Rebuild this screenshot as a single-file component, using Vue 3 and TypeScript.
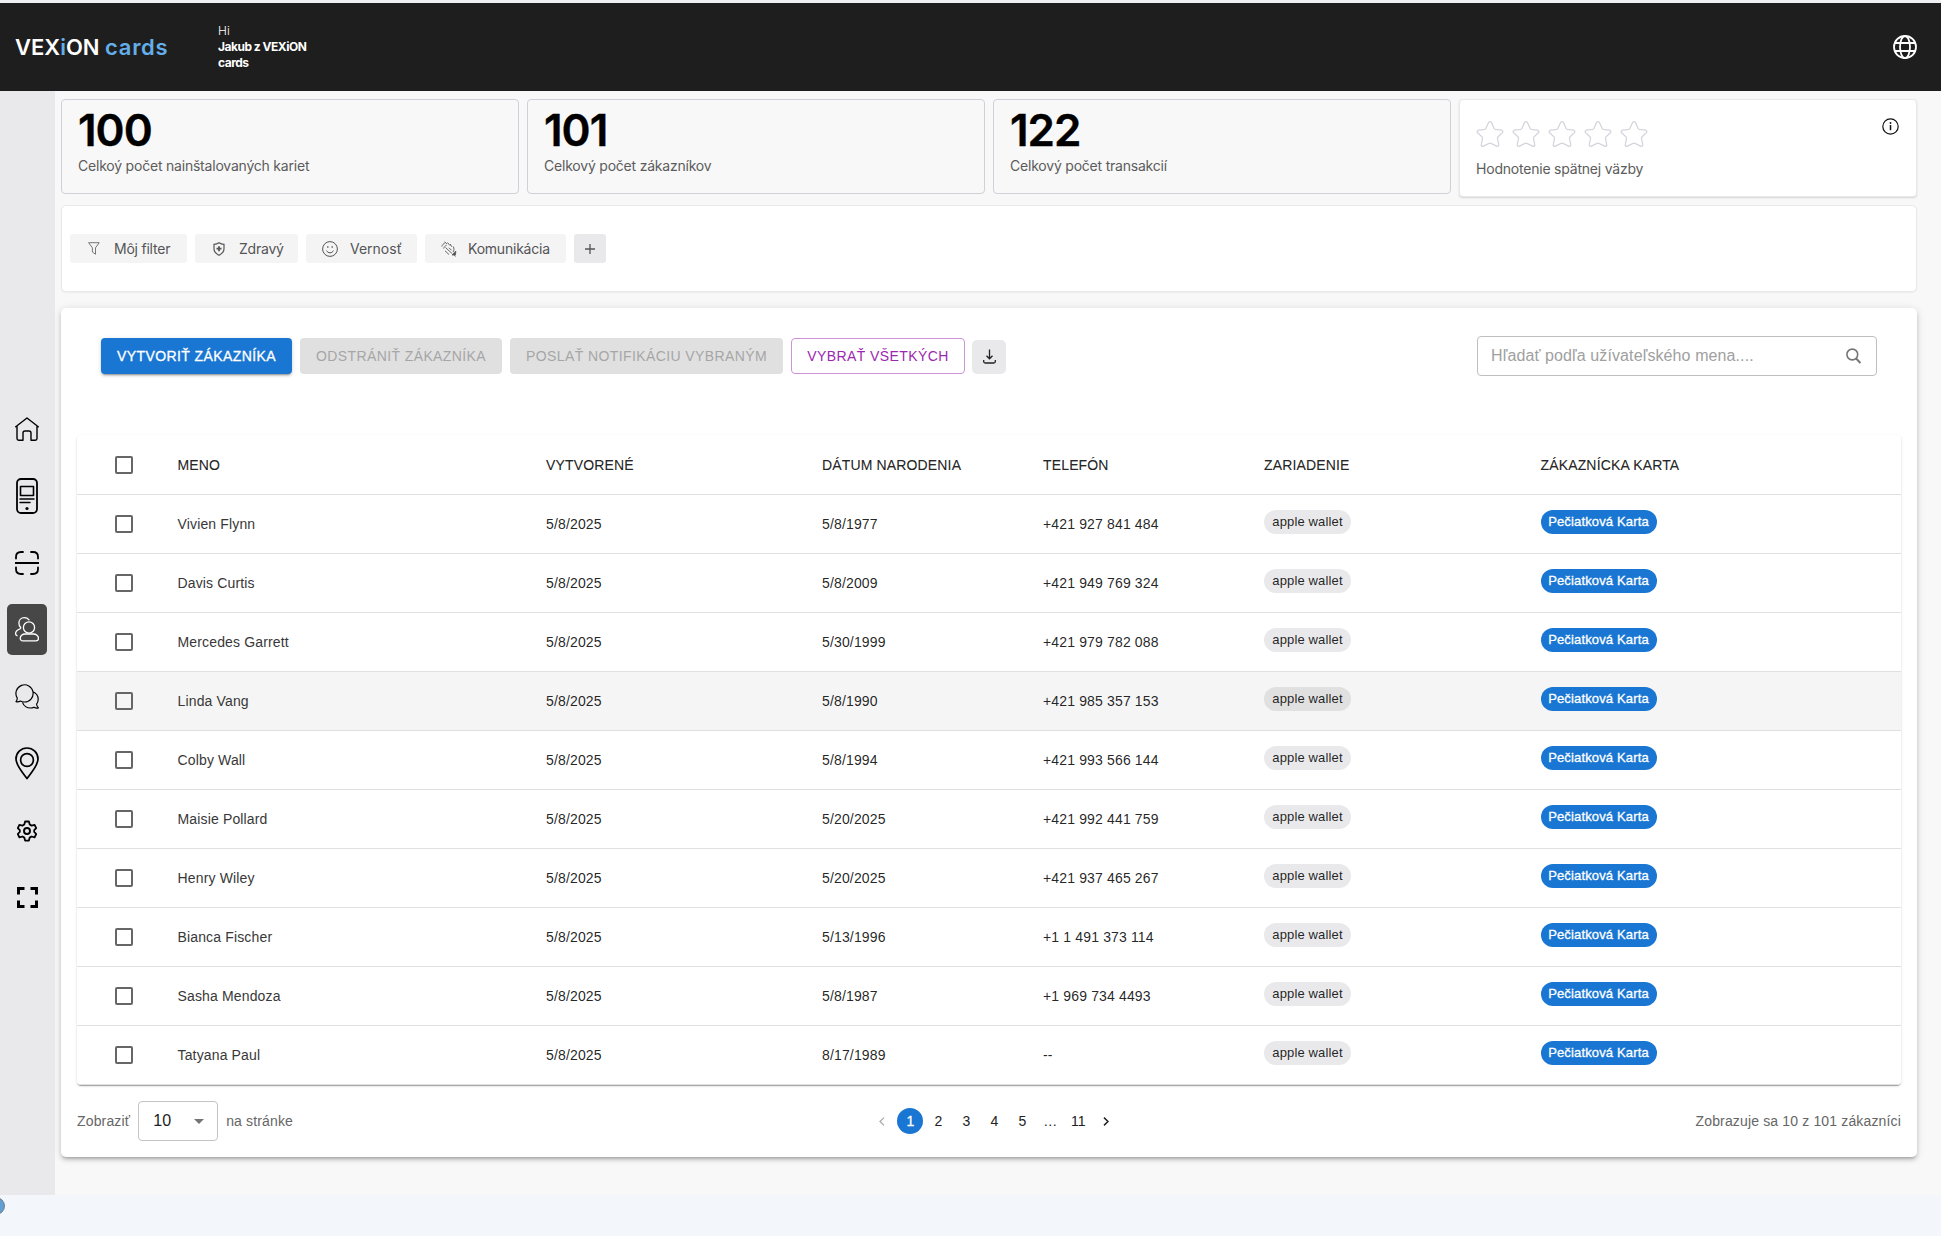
<script setup lang="ts">
interface Customer {
  name: string
  created: string
  born: string
  phone: string
  hovered?: boolean
}

const stats = [
  { value: '100', label: 'Celkoý počet nainštalovaných kariet' },
  { value: '101', label: 'Celkový počet zákazníkov' },
  { value: '122', label: 'Celkový počet transakcií' },
]

const columns = ['Meno', 'Vytvorené', 'Dátum narodenia', 'Telefón', 'Zariadenie', 'Zákaznícka karta']

const customers: Customer[] = [
  { name: 'Vivien Flynn', created: '5/8/2025', born: '5/8/1977', phone: '+421 927 841 484' },
  { name: 'Davis Curtis', created: '5/8/2025', born: '5/8/2009', phone: '+421 949 769 324' },
  { name: 'Mercedes Garrett', created: '5/8/2025', born: '5/30/1999', phone: '+421 979 782 088' },
  { name: 'Linda Vang', created: '5/8/2025', born: '5/8/1990', phone: '+421 985 357 153', hovered: true },
  { name: 'Colby Wall', created: '5/8/2025', born: '5/8/1994', phone: '+421 993 566 144' },
  { name: 'Maisie Pollard', created: '5/8/2025', born: '5/20/2025', phone: '+421 992 441 759' },
  { name: 'Henry Wiley', created: '5/8/2025', born: '5/20/2025', phone: '+421 937 465 267' },
  { name: 'Bianca Fischer', created: '5/8/2025', born: '5/13/1996', phone: '+1 1 491 373 114' },
  { name: 'Sasha Mendoza', created: '5/8/2025', born: '5/8/1987', phone: '+1 969 734 4493' },
  { name: 'Tatyana Paul', created: '5/8/2025', born: '8/17/1989', phone: '--' },
]

const pages = ['1', '2', '3', '4', '5', '…', '11']
</script>

<template>
  <div class="app">
    <header class="topbar">
      <div class="logo">VEX<span class="accent">i</span>ON <span class="accent cards">cards</span></div>
      <div class="greeting">
        <span class="hi">Hi</span>
        <strong>Jakub z VEXiON cards</strong>
      </div>
      <svg class="globe" viewBox="0 0 24 24" fill="none" stroke="#fff" stroke-width="1.8">
        <circle cx="12" cy="12" r="11" />
        <ellipse cx="12" cy="12" rx="5" ry="11" />
        <path d="M1.8 8h20.4M1.8 16h20.4" />
      </svg>
    </header>

    <div class="body">
      <nav class="sidebar">
        <a class="nav"><svg width="24" height="24" viewBox="0 0 24 24" stroke-width="1.4"><path d="M.7 9.7 12 1l11.3 8.700M2 8.800V21.500Q2 23.200 3.700 23.200H8V16q0-2 2-2h4q2 0 2 2v7.200h4.300q1.700 0 1.700-1.700V8.800" /></svg></a>
        <a class="nav"><svg width="22" height="36" viewBox="0 0 22 36"><rect x="1" y="1" width="20" height="34" rx="4" stroke-width="1.8" /><rect x="4.500" y="8.500" width="13" height="9" stroke-width="1.600" /><path d="M4 21h14M4 24.500h10" stroke-width="1.500" /><circle cx="11" cy="30.500" r="1.600" fill="#000" stroke="none" /></svg></a>
        <a class="nav"><svg width="24" height="24" viewBox="0 0 24 24" stroke-width="1.8"><path d="M1 7.500V6q0-5 5-5h2M16 1h2q5 0 5 5v1.500M1 16.500V18q0 5 5 5h2M16 23h2q5 0 5-5v-1.500M0 12h24" /></svg></a>
        <a class="nav active"><svg width="24" height="25" viewBox="0 0 24 25" stroke-width="1.3"><circle cx="14" cy="10.500" r="5.600" /><path d="M10 17h8.500c2.500 0 5 2 5 4.300 0 1.500-.9 2.500-2.500 2.500H7.800c-1.600 0-2.600-1-2.600-2.500C5.200 19 7.500 17 10 17zM14 2.800C12.800 1.300 11 .7 9.300.7 6.200.7 3.900 3 3.900 6c0 1.700.5 3 1.600 4.200.5.700.2 1.300-.5 1.600C2.300 12.800.6 14.300.6 16.500c0 1 .5 1.900 1.400 2.200" /></svg></a>
        <a class="nav"><svg width="24" height="25" viewBox="0 0 24 25"><path d="M1 17.600c1-1.200 1.400-2.300 1.200-3.700A8.600 8.600 0 1 1 9.300 18c-1.500 0-2.700-.3-3.900-1-1.300.8-2.800 1-4.400.6zM18 7.700c3.200 1.400 5.200 4.200 5.200 7.500 0 2-.6 3.600-1.600 5 .1 1.500.7 2.500 1.800 3.700-1.700.4-3.200.1-4.400-.7-1 .5-2.200.8-3.500.8-3.600 0-6.600-2-7.800-5.100" stroke-width="1.200" /></svg></a>
        <a class="nav"><svg width="24" height="33" viewBox="0 0 24 33"><path d="M12 31.500C8 26 1 18.500 1 12a11 11 0 0 1 22 0c0 6.500-7 14-11 19.500z" stroke-width="1.700" /><circle cx="12" cy="13" r="6.400" stroke-width="1.700" /></svg></a>
        <a class="nav"><svg width="20" height="22" viewBox="0 0 20 22"><path d="M8.100 1.500h3.800l.8 3 1.900 1.100 3-.8 1.600 3.300-2 2.100v1.700l2 2.100-1.600 3.300-3-.8-1.900 1.100-.8 3H8.100l-.8-3-1.900-1.100-3 .8L.8 14l2-2.100v-1.700l-2-2.100 1.600-3.300 3 .8 1.900-1.100z" stroke-width="1.800" /><circle cx="10" cy="11" r="3" stroke-width="1.900" /></svg></a>
        <a class="nav"><svg width="21" height="21" viewBox="0 0 21 21" stroke-width="3"><path d="M1.500 7.500v-6h6M13.500 1.500h6v6M1.500 13.500v6h6M13.500 19.500h6v-6" stroke-linecap="butt" stroke-linejoin="miter" /></svg></a>
      </nav>

      <main class="main">
        <section class="stats">
          <article v-for="s in stats" :key="s.value" class="stat">
            <div class="value">{{ s.value }}</div>
            <div class="label">{{ s.label }}</div>
          </article>
          <article class="stat rating">
            <div class="stars">
              <svg v-for="n in 5" :key="n" viewBox="0 0 28 28"><path d="M14 1.600c.8 0 1.200.5 1.500 1.100l2.700 5.800c.2.500.6.800 1.200.9l6 .8c1.400.2 1.900 1.600.9 2.600l-4.400 4.200c-.4.400-.5.900-.4 1.400l1.200 6.200c.2 1.400-1 2.200-2.200 1.600l-5.500-2.800a2 2 0 0 0-2 0l-5.500 2.800c-1.200.6-2.400-.2-2.200-1.600l1.200-6.200c.1-.5 0-1-.4-1.400l-4.400-4.200c-1-1-.5-2.400.9-2.600l6-.8c.6-.1 1-.4 1.200-.9l2.700-5.800c.3-.6.7-1.100 1.500-1.100z" /></svg>
            </div>
            <div class="label">Hodnotenie spätnej väzby</div>
            <svg class="info" viewBox="0 0 17 17"><circle cx="8.500" cy="8.500" r="7.700" fill="none" stroke="#111" stroke-width="1.200" /><path d="M8.500 7v5.200" stroke="#111" stroke-width="1.500" /><circle cx="8.500" cy="5" r=".9" fill="#111" /></svg>
          </article>
        </section>

        <section class="filters">
          <button class="filter f1"><svg width="12" height="13" viewBox="0 0 12 13"><path d="M.6.700h10.600L7.500 5.800v6.400L4.400 10V5.800z" stroke-width=".8" /></svg>Môj filter</button>
          <button class="filter f2"><svg width="12" height="14" viewBox="0 0 12 14"><path d="M6 .8c1.600 1.100 3.200 1.500 5 1.600v4.400c0 3-1.900 5-5 6.400-3.100-1.400-5-3.400-5-6.400V2.400C2.800 2.300 4.400 1.900 6 .8z" stroke-width="1.200" /><path d="M6 4.200v5M3.500 6.700h5" stroke-width="1.800" /></svg>Zdravý</button>
          <button class="filter f3"><svg width="16" height="16" viewBox="0 0 16 16"><circle cx="8" cy="8" r="7.400" stroke-width="1" /><path d="M4.600 9.600c.7 1.500 1.900 2.200 3.400 2.200s2.700-.7 3.400-2.200" stroke-width="1" /><path d="M5.800 5.200v1.600M10.200 5.200v1.600" stroke-width="1.300" /></svg>Vernosť</button>
          <button class="filter f4"><svg width="16" height="16" viewBox="0 0 16 16"><path d="M.8 5.500C1.300 3.800 2.200 2.800 3.800 2M2.700 7.500c.3-1.500 1.200-2.600 2.800-3.200M3.500.8 6 3M6.500 1.500l2.300 3M9.200 3l1.600 2.800M4.500 6.500l6.500 6M4 9.800l4 3.700M8 6.800l2.500 2.500M12.300 5.500c.9 2 .9 4-.3 5.500" stroke-width=".9" /><path d="m14.800 10-3.800 4h3.500zM12.500 13l2 2.500" fill="#555" stroke-width=".8" /></svg>Komunikácia</button>
          <button class="filter add"><svg width="10" height="10" viewBox="0 0 10 10"><path d="M5 0v10M0 5h10" stroke-width="1.300" /></svg></button>
        </section>

        <section class="panel">
          <div class="toolbar">
            <button class="btn primary">Vytvoriť zákazníka</button>
            <button class="btn disabled b2">Odstrániť zákazníka</button>
            <button class="btn disabled b3">Poslať notifikáciu vybraným</button>
            <button class="btn outlined">Vybrať všetkých</button>
            <button class="download"><svg width="13" height="15" viewBox="0 0 13 15" fill="none" stroke="#222" stroke-width="1.300"><path d="M6.500.5v9M3.500 6.800l3 3 3-3M.7 11v1.500q0 1.500 1.500 1.500h8.600q1.500 0 1.500-1.500V11" /></svg></button>
            <div class="search">
              <span>Hľadať podľa užívateľského mena....</span>
              <svg width="15" height="16" viewBox="0 0 15 16" fill="none" stroke="#757575" stroke-width="1.600"><circle cx="6.300" cy="6.500" r="5.400" /><path d="m10.200 10.500 4.200 4.500" stroke-width="1.900" /></svg>
            </div>
          </div>

          <div class="table-wrap">
            <table>
              <colgroup>
                <col class="c0" /><col class="c1" /><col class="c2" /><col class="c3" /><col class="c4" /><col class="c5" /><col />
              </colgroup>
              <thead>
                <tr>
                  <th class="check"><i class="box"></i></th>
                  <th v-for="c in columns" :key="c">{{ c }}</th>
                </tr>
              </thead>
              <tbody>
                <tr v-for="c in customers" :key="c.name" :class="{ hovered: c.hovered }">
                  <td class="check"><i class="box"></i></td>
                  <td class="name">{{ c.name }}</td>
                  <td>{{ c.created }}</td>
                  <td>{{ c.born }}</td>
                  <td>{{ c.phone }}</td>
                  <td><span class="chip">apple wallet</span></td>
                  <td><span class="chip blue">Pečiatková Karta</span></td>
                </tr>
              </tbody>
            </table>
          </div>

          <footer class="pager">
            <div class="size">
              <span>Zobraziť</span>
              <div class="select"><span>10</span><svg width="10" height="5" viewBox="0 0 10 5"><path d="M0 0h10L5 5z" fill="#757575" /></svg></div>
              <span>na stránke</span>
            </div>
            <div class="pages">
              <span class="page"><svg width="6" height="9" viewBox="0 0 6 9"><path d="M5 .6 1 4.500l4 3.900" fill="none" stroke="#aaa" stroke-width="1.300" /></svg></span>
              <span v-for="p in pages" :key="p" class="page" :class="{ current: p === '1' }">{{ p }}</span>
              <span class="page"><svg width="6" height="9" viewBox="0 0 6 9"><path d="m1 .6 4 3.900-4 3.900" fill="none" stroke="#222" stroke-width="1.500" /></svg></span>
            </div>
            <div class="total">Zobrazuje sa 10 z 101 zákazníci</div>
          </footer>
        </section>
      </main>
    </div>
    <div class="bottom"><i class="bubble"></i></div>
  </div>
</template>

<style>
body { margin: 0; }
</style>

<style scoped>
* { box-sizing: border-box; }
.app {
  width: 1941px;
  height: 1236px;
  position: relative;
  overflow: hidden;
  display: flex;
  flex-direction: column;
  background: #f8f8f8;
  border-top: 3px solid #eff0f2;
  font-family: "Liberation Sans", Arial, sans-serif;
  color: rgba(0, 0, 0, .87);
}
button { font: inherit; border: 0; padding: 0; }
.topbar {
  height: 88px;
  flex: none;
  background: #1e1e1e;
  color: #fff;
  display: flex;
  align-items: center;
  padding: 0 24px 0 15px;
  font-family: Inter, sans-serif;
}
.logo { width: 203px; font-size: 22px; font-weight: 600; white-space: nowrap; }
.accent { color: #64aeea; }
.cards { letter-spacing: .7px; }
.greeting { width: 100px; font-size: 12px; line-height: 16px; }
.greeting .hi { display: block; font-weight: 300; }
.greeting strong { font-weight: 700; display: block; letter-spacing: -.5px; }
.globe { width: 24px; height: 24px; margin-left: auto; }
.body { height: 1104px; flex: none; display: flex; }
.sidebar {
  width: 55px;
  padding-top: 40px;
  background: #e9e9eb;
  display: flex;
  flex-direction: column;
  align-items: center;
  justify-content: center;
  gap: 16px;
}
.nav {
  width: 40px;
  height: 51px;
  border-radius: 5px;
  margin-right: 1px;
  display: flex;
  align-items: center;
  justify-content: center;
}
.nav svg { fill: none; stroke: #000; stroke-linejoin: round; stroke-linecap: round; }
.nav.active { background: #474747; }
.nav.active svg { stroke: #fff; }
.main { flex: 1; padding: 8px 24px 0 6px; }
.stats { display: flex; gap: 8px; align-items: flex-start; height: 106px; }
.stat {
  width: 458px;
  height: 95px;
  border: 1px solid #d0d1d8;
  border-radius: 4px;
  padding: 3px 16px;
  font-family: Inter, sans-serif;
}
.value { font-size: 44px; line-height: 54px; font-weight: 600; letter-spacing: -1px; color: #000; -webkit-text-stroke: .4px; }
.label { font-size: 14px; line-height: 18px; letter-spacing: -.21px; color: #5c5c5c; white-space: nowrap; }
.rating {
  position: relative;
  height: 98px;
  background: #fff;
  border-color: #e8e8ea;
  box-shadow: 0 1px 2px rgba(0, 0, 0, .14);
  padding: 20px 16px;
}
.stars { display: flex; gap: 8px; height: 40px; }
.stars svg { width: 28px; height: 28px; fill: none; stroke: #d5d5de; stroke-width: 1.300; }
.info { position: absolute; width: 17px; height: 17px; right: 17px; top: 18px; }
.filters {
  height: 87px;
  border: 1px solid #e9e9ea;
  border-radius: 5px;
  background: #fff;
  box-shadow: 0 1px 2px rgba(0, 0, 0, .05);
  padding: 0 8px;
  display: flex;
  align-items: center;
  gap: 8px;
}
.filter {
  height: 29px;
  border-radius: 3px;
  background: #f4f4f5;
  color: #555;
  font: 14px Inter, sans-serif;
  letter-spacing: -.22px;
  display: flex;
  align-items: center;
  white-space: nowrap;
}
.filter svg { fill: none; stroke: #555; flex: none; }
.f1 { width: 117px; padding-left: 18px; gap: 14px; }
.f2 { width: 103px; padding-left: 18px; gap: 14px; }
.f3 { width: 111px; padding-left: 16px; gap: 12px; letter-spacing: 0; }
.f4 { width: 141px; padding-left: 16px; gap: 11px; }
.add { width: 32px; background: #e9e9eb; justify-content: center; }
.panel {
  height: 849px;
  margin-top: 16px;
  border-radius: 5px;
  background: #fff;
  box-shadow: 0 3px 3px -2px rgba(0, 0, 0, .2), 0 3px 4px rgba(0, 0, 0, .14), 0 1px 8px rgba(0, 0, 0, .12);
  padding: 28px 16px 0;
}
.toolbar { height: 99px; padding: 0 24px; display: flex; align-items: flex-start; gap: 8px; }
.btn {
  height: 36px;
  margin-top: 2px;
  border-radius: 4px;
  font-size: 14px;
  letter-spacing: .4px;
  text-transform: uppercase;
  white-space: nowrap;
}
.primary {
  width: 191px;
  background: #1976d2;
  color: #fff;
  font-weight: 400;
  -webkit-text-stroke: .3px;
  box-shadow: 0 3px 1px -2px rgba(0, 0, 0, .2), 0 2px 2px rgba(0, 0, 0, .14), 0 1px 5px rgba(0, 0, 0, .12);
}
.disabled { background: #e0e0e0; color: #a6a6a6; }
.b2 { width: 202px; }
.b3 { width: 273px; }
.outlined { width: 174px; border: 1px solid #cd93d7; color: #9c27b0; background: #fff; }
.download {
  width: 34px;
  height: 34px;
  margin: 4px 0 0 -1px;
  border-radius: 5px;
  background: #e9e9eb;
  display: flex;
  align-items: center;
  justify-content: center;
}
.download svg { margin-bottom: 2px; }
.search {
  width: 400px;
  height: 40px;
  margin-left: auto;
  border: 1px solid #bfbfbf;
  border-radius: 4px;
  padding: 0 15px 0 13px;
  display: flex;
  align-items: center;
  justify-content: space-between;
  font-size: 16px;
  letter-spacing: .1px;
  color: #a0a0a0;
}
.table-wrap {
  height: 650px;
  border-radius: 4px;
  overflow: hidden;
  box-shadow: 0 2px 1px -1px rgba(0, 0, 0, .2), 0 1px 1px rgba(0, 0, 0, .14), 0 1px 3px rgba(0, 0, 0, .12);
}
table { width: 100%; table-layout: fixed; border-collapse: separate; border-spacing: 0; font-size: 14px; letter-spacing: .15px; }
.c0 { width: 84.5px; }
.c1 { width: 368.5px; }
.c2 { width: 276px; }
.c3 { width: 221px; }
.c4 { width: 221px; }
.c5 { width: 276.500px; }
th, td { height: 59px; padding: 0 16px; text-align: left; border-bottom: 1px solid #e0e0e0; white-space: nowrap; }
th { height: 60px; font-weight: 400; text-transform: uppercase; -webkit-text-stroke: .15px; }
td.name { color: #383838; }
.check { padding: 0 0 0 38px; }
.box { display: block; width: 18px; height: 18px; border: 2px solid #666; border-radius: 2px; }
tr.hovered td { background: #f5f5f5; }
.chip {
  display: inline-flex;
  align-items: center;
  justify-content: center;
  width: 87px;
  height: 24px;
  border-radius: 12px;
  margin-bottom: 5px;
  vertical-align: middle;
  background: #e9e9eb;
  font-size: 13px;
}
.hovered .chip:not(.blue) { background: #e0e0e1; }
.chip.blue { width: 116px; background: #1976d2; color: #fff; -webkit-text-stroke: .3px; }
.pager { display: flex; justify-content: space-between; align-items: center; height: 72px; font-size: 14px; color: #666; }
.size { display: flex; align-items: center; gap: 8px; letter-spacing: .15px; }
.select {
  width: 80px;
  height: 40px;
  border: 1px solid #c4c4c4;
  border-radius: 4px;
  padding: 0 13px 0 14px;
  display: flex;
  align-items: center;
  justify-content: space-between;
  font-size: 16px;
  color: #222;
}
.pages { display: flex; gap: 2px; color: #222; }
.page { width: 26px; height: 26px; border-radius: 13px; display: flex; align-items: center; justify-content: center; }
.current { background: #1976d2; color: #fff; -webkit-text-stroke: .3px; }
.total { text-align: right; letter-spacing: .15px; }
.bottom { flex: 1; position: relative; background: #f3f7fb; }
.bubble { position: absolute; left: -13px; top: 2px; width: 18px; height: 18px; border-radius: 50%; background: #5f9fd3; border: 1px solid #75808a; }
</style>
